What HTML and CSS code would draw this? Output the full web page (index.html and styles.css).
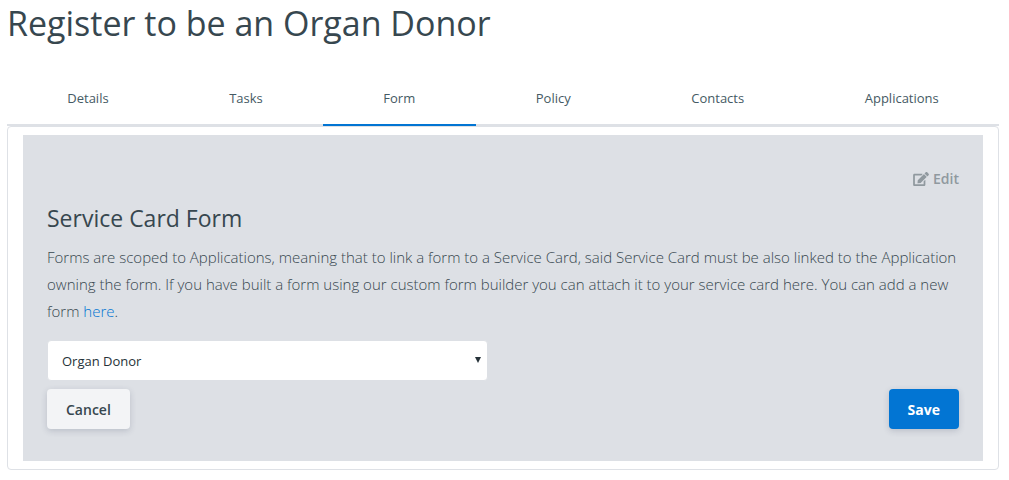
FILE: index.html
```html
<!DOCTYPE html>
<html lang="en">
<head>
<meta charset="utf-8">
<meta name="viewport" content="width=device-width, initial-scale=1">
<title>Register to be an Organ Donor</title>
<link rel="stylesheet" href="styles.css">
</head>
<body>
<main class="page">
  <h1 class="page-title">Register to be an Organ Donor</h1>
  <nav class="tabs">
    <a class="tab" href="#details">Details</a>
    <a class="tab" href="#tasks">Tasks</a>
    <a class="tab tab-active" href="#form" aria-current="page">Form</a>
    <a class="tab" href="#policy">Policy</a>
    <a class="tab" href="#contacts">Contacts</a>
    <a class="tab" href="#applications">Applications</a>
  </nav>
  <section class="card">
    <form class="panel">
      <button class="edit" type="button">
        <svg class="edit-icon" viewBox="0 0 576 512" aria-hidden="true"><path fill="currentColor" d="M402.600 83.200l90.200 90.200c3.800 3.800 3.800 10 0 13.800L274.400 405.600l-92.800 10.300c-12.400 1.400-22.900-9.100-21.500-21.500l10.300-92.800L388.800 83.200c3.800-3.800 10-3.800 13.800 0zm162-22.900l-48.800-48.800c-15.200-15.200-39.900-15.200-55.200 0l-35.400 35.400c-3.800 3.800-3.800 10 0 13.800l90.200 90.200c3.800 3.800 10 3.800 13.800 0l35.400-35.400c15.200-15.300 15.200-40 0-55.200zM384 346.200V448H64V128h229.800c3.200 0 6.200-1.300 8.500-3.500l40-40c7.600-7.600 2.200-20.500-8.500-20.500H48C21.500 64 0 85.500 0 112v352c0 26.500 21.500 48 48 48h352c26.500 0 48-21.500 48-48V306.200c0-10.700-12.900-16-20.500-8.500l-40 40c-2.200 2.300-3.500 5.300-3.500 8.500z"/></svg>
        Edit
      </button>
      <h2 class="panel-title"><label for="service-form">Service Card Form</label></h2>
      <p class="panel-text">Forms are scoped to Applications, meaning that to link a form to a Service Card, said Service Card must be also linked to the Application owning the form. If you have built a form using our custom form builder you can attach it to your service card here. You can add a new form <a class="link" href="#new">here</a>.</p>
      <div class="select-wrap">
        <select class="select" id="service-form">
          <option>Organ Donor</option>
        </select>
        <svg class="caret" viewBox="0 0 6 6" aria-hidden="true"><path fill="currentColor" d="M0 0h6L3 6z"/></svg>
      </div>
      <div class="actions">
        <button class="button" type="button">Cancel</button>
        <button class="button button-primary" type="submit">Save</button>
      </div>
    </form>
  </section>
</main>
</body>
</html>
```
FILE: styles.css
```css
* {
  box-sizing: border-box;
}

body {
  margin: 0;
  background: #fff;
  color: #37474f;
  font-family: "Segoe UI", "Open Sans", "Noto Sans", sans-serif;
  font-size: 14px;
}

.page {
  padding: 0 10px 10px 7px;
}

.page-title {
  margin: 0;
  font-size: 34px;
  font-weight: 400;
  line-height: 46px;
}

.tabs {
  display: flex;
  margin-top: 25px;
  border-bottom: 2px solid #dee1e6;
}

.tab {
  flex: 1 0 auto;
  margin-bottom: -2px;
  padding: 16px 20px 15px;
  border-bottom: 2px solid transparent;
  color: #455a64;
  font-size: 13px;
  line-height: 22px;
  text-align: center;
  text-decoration: none;
}

.tab-active {
  border-bottom-color: #0275d3;
}

.card {
  padding: 8px 15px;
  border: 1px solid #dee1e6;
  border-radius: 4px;
}

.panel {
  display: flex;
  flex-direction: column;
  padding: 32px 24px;
  background: #dde0e5;
}

.edit {
  display: flex;
  align-items: center;
  align-self: flex-end;
  gap: 4px;
  padding: 0;
  border: 0;
  background: none;
  color: #90999f;
  font: 600 14px/24px "Segoe UI", "Open Sans", sans-serif;
}

.edit-icon {
  width: 16px;
  height: 14px;
}

.panel-title {
  margin: 11px 0 10px;
  font-size: 23px;
  font-weight: 400;
  line-height: 32px;
}

.panel-text {
  margin: 0;
  font-size: 15px;
  font-weight: 300;
  line-height: 27px;
}

.link {
  color: #0275d3;
  text-decoration: none;
}

.select-wrap {
  position: relative;
  width: calc(50% - 15px);
  margin: 15px 0 8px;
}

.select {
  display: block;
  width: 100%;
  height: 41px;
  padding: 0 14px;
  border: 1px solid #dde0e5;
  border-radius: 4px;
  background: #fff;
  color: #263238;
  font: 400 13px "Segoe UI", "Open Sans", sans-serif;
  appearance: none;
}

.caret {
  position: absolute;
  top: 17px;
  right: 7px;
  width: 6px;
  height: 6px;
  color: #263238;
  pointer-events: none;
}

.actions {
  display: flex;
  justify-content: space-between;
}

.button {
  height: 40px;
  padding: 0 19px;
  border: 0;
  border-radius: 4px;
  background: #f3f4f6;
  box-shadow: 0 2px 6px rgba(50, 60, 90, 0.2);
  color: #37474f;
  font: 600 14px "Segoe UI", "Open Sans", sans-serif;
}

.button-primary {
  background: #0275d3;
  color: #fff;
  font-weight: 700;
}
```
